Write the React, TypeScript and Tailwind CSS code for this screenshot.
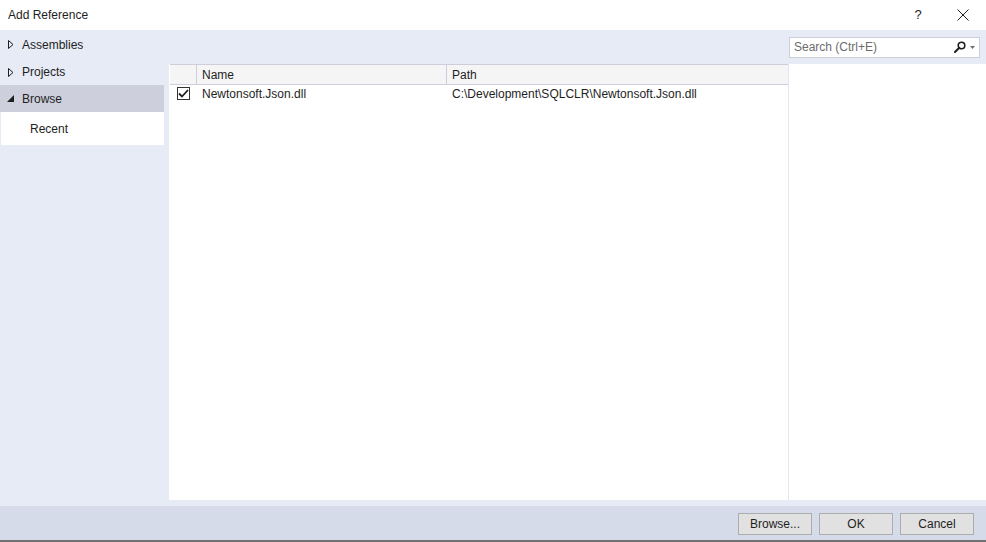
import React from "react";

const font = { fontFamily: '"Liberation Sans", Arial, sans-serif' };

function TriRight() {
  return (
    <svg width="6" height="9" viewBox="0 0 6 9" className="shrink-0">
      <path d="M0.5 0.5 L5 4.5 L0.5 8.5 Z" fill="none" stroke="#1e1e1e" strokeWidth="1" />
    </svg>
  );
}

function TriDown() {
  return (
    <svg width="7" height="7" viewBox="0 0 7 7" className="shrink-0">
      <path d="M7 0 L7 7 L0 7 Z" fill="#1e1e1e" />
    </svg>
  );
}

function Btn({ label }: { label: string }) {
  return (
    <button className="w-[74px] h-[22px] bg-[#e1e1e1] border border-[#adadad] text-[12px] text-[#1e1e1e] flex items-center justify-center">
      {label}
    </button>
  );
}

export default function App() {
  return (
    <div className="w-[986px] h-[542px] flex flex-col bg-[#e6ebf5] text-[12px] text-[#1e1e1e] overflow-hidden" style={font}>
      {/* Title bar */}
      <div className="h-[30px] bg-white flex items-center pl-[8px] shrink-0">
        <span className="flex-1">Add Reference</span>
        <span className="w-[14px] text-center text-[13px] mr-[32px]">?</span>
        <svg width="12" height="12" viewBox="0 0 12 12" className="mr-[17px]">
          <path d="M0.5 0.5 L11.5 11.5 M11.5 0.5 L0.5 11.5" stroke="#1e1e1e" strokeWidth="1" />
        </svg>
      </div>

      {/* Main */}
      <div className="flex-1 flex min-h-0">
        {/* Left nav */}
        <div className="w-[164px] shrink-0 flex flex-col">
          <div className="h-[28px] pt-[1px] flex items-center pl-[8px] gap-[8px]">
            <TriRight />
            <span>Assemblies</span>
          </div>
          <div className="h-[27px] pt-[1px] flex items-center pl-[8px] gap-[8px]">
            <TriRight />
            <span>Projects</span>
          </div>
          <div className="h-[27px] flex items-center pl-[7px] gap-[8px] bg-[#cdd0dc]">
            <TriDown />
            <span>Browse</span>
          </div>
          <div className="h-[33px] flex items-center pl-[29px] ml-[1px] bg-white">
            <span>Recent</span>
          </div>
        </div>

        {/* Right area */}
        <div className="flex-1 flex flex-col pl-[5px] pb-[6px] min-w-0">
          <div className="h-[34px] shrink-0 flex items-center justify-end pr-[6px]">
            <div className="w-[191px] h-[21px] bg-white border border-[#cccedb] flex items-center pl-[4px] pr-[4px]">
              <span className="flex-1 text-[#6d6d6d]">Search (Ctrl+E)</span>
              <svg width="12" height="12" viewBox="0 0 12 12">
                <circle cx="7.5" cy="4.5" r="3.3" fill="none" stroke="#1e1e1e" strokeWidth="1.6" />
                <path d="M5.2 6.8 L1 11" stroke="#1e1e1e" strokeWidth="2" strokeLinecap="round" />
              </svg>
              <svg width="5" height="3" viewBox="0 0 5 3" className="ml-[4px]">
                <path d="M0 0 L5 0 L2.5 3 Z" fill="#6d6d6d" />
              </svg>
            </div>
          </div>
          <div className="flex-1 bg-white flex min-h-0">
            <div className="w-[620px] border-r border-[#e3e6f0] flex flex-col">
              <div className="h-[21px] flex bg-[#f5f5f5] border-t border-b border-[#cccedb] ml-[1px]">
                <div className="w-[27px] border-r border-[#cccedb]" />
                <div className="w-[250px] border-r border-[#cccedb] pl-[5px] flex items-center">Name</div>
                <div className="flex-1 pl-[5px] flex items-center">Path</div>
              </div>
              <div className="h-[17px] flex items-center ml-[1px]">
                <div className="w-[27px] flex items-center justify-center">
                  <div className="w-[13px] h-[13px] border border-[#333333] bg-white flex items-center justify-center">
                    <svg width="11" height="9" viewBox="0 0 11 9">
                      <path d="M1 4.5 L4 7.5 L10 1" fill="none" stroke="#1e1e1e" strokeWidth="1.8" />
                    </svg>
                  </div>
                </div>
                <div className="w-[250px] pl-[5px]">Newtonsoft.Json.dll</div>
                <div className="flex-1 pl-[5px] whitespace-nowrap">C:\Development\SQLCLR\Newtonsoft.Json.dll</div>
              </div>
            </div>
            <div className="flex-1" />
          </div>
        </div>
      </div>

      {/* Footer */}
      <div className="h-[34px] shrink-0 bg-[#d6dbe9] flex items-center justify-end gap-[7px] pr-[12px] pt-[2px]">
        <Btn label="Browse..." />
        <Btn label="OK" />
        <Btn label="Cancel" />
      </div>
      <div className="h-[2px] shrink-0 bg-[#717171]" />
    </div>
  );
}
